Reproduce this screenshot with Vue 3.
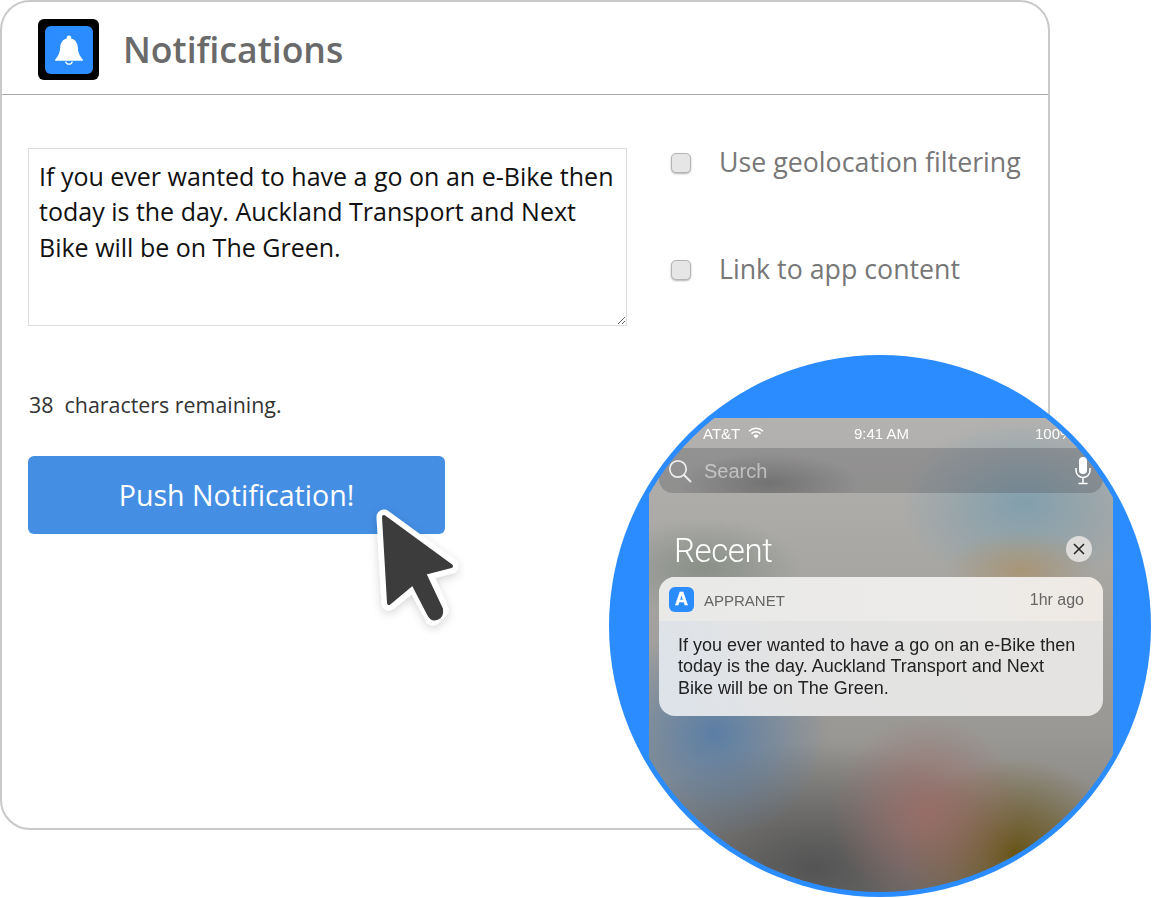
<script setup>
import { ref } from 'vue'

const message = ref('If you ever wanted to have a go on an e-Bike then today is the day. Auckland Transport and Next Bike will be on The Green.')
const remaining = ref(38)
const options = ['Use geolocation filtering', 'Link to app content']
</script>

<template>
  <div class="page">
    <section class="panel">
      <header class="panel-head">
        <div class="app-icon">
          <div class="app-icon-inner">
            <svg width="30" height="32" viewBox="0 0 30 32">
              <path fill="#fff" d="M15 1.500c1.300 0 2.200.9 2.200 2v1c4.300 1 6.300 4.600 6.600 8.800.3 4.800 1.400 8.200 5 12.200.4.500.1 1.300-.6 1.300H1.800c-.7 0-1-.8-.6-1.300 3.600-4 4.700-7.400 5-12.200.3-4.200 2.300-7.800 6.600-8.800v-1c0-1.100.9-2 2.200-2z"/>
              <path fill="none" stroke="#fff" stroke-width="1.200" d="M11.600 27.500a3.500 3.500 0 0 0 6.800 0"/>
            </svg>
          </div>
        </div>
        <h1 class="title">Notifications</h1>
      </header>
      <div class="panel-body">
        <div class="form-col">
          <textarea v-model="message" class="message"></textarea>
          <p class="counter">{{ remaining }}&nbsp; characters remaining.</p>
          <button class="push-btn">Push Notification!</button>
        </div>
        <div class="options">
          <label v-for="opt in options" :key="opt" class="option">
            <input type="checkbox" class="check" />
            <span>{{ opt }}</span>
          </label>
        </div>
      </div>
    </section>

    <!-- cursor over the button -->
    <svg class="cursor" width="100" height="135" viewBox="365 500 100 135">
      <defs>
        <filter id="cursor-shadow" x="-30%" y="-30%" width="160%" height="160%">
          <feDropShadow dx="0" dy="3" stdDeviation="5" flood-color="#000" flood-opacity="0.16"/>
        </filter>
      </defs>
      <path filter="url(#cursor-shadow)" fill="#fff" stroke="#fff" stroke-width="15" stroke-linejoin="round"
        d="M384 517 L451 566 L425 573 L441 610 L433 618 L414 583 L389 603 Z"/>
      <path fill="#3c3c3c" stroke="#3c3c3c" stroke-width="4" stroke-linejoin="round"
        d="M384 517 L451 566 L424 573 L441 609 Q442 616 437 618 Q432 620 429 614 L413 583 L389 603 Z"/>
    </svg>

    <!-- phone preview bubble -->
    <div class="bubble">
      <div class="bubble-clip">
        <div class="screen">
          <div class="status">
            <span class="carrier">AT&amp;T</span>
            <svg class="wifi" width="16" height="12" viewBox="0 0 16 12">
              <path fill="none" stroke="#fff" stroke-width="1.500" d="M1 4.200a10 10 0 0 1 14 0M3.400 6.600a6.600 6.600 0 0 1 9.200 0"/>
              <path fill="#fff" d="M8 11.500 5.400 8.700a3.700 3.700 0 0 1 5.200 0z"/>
            </svg>
            <span class="clock">9:41 AM</span>
            <span class="battery">100%</span>
          </div>
          <div class="search">
            <svg width="24" height="24" viewBox="0 0 24 24">
              <circle cx="10" cy="10" r="8.200" fill="none" stroke="#eee" stroke-width="1.700"/>
              <path d="M16 16l6.500 6.500" stroke="#eee" stroke-width="2" stroke-linecap="round"/>
            </svg>
            <span class="search-text">Search</span>
            <svg class="mic" width="16" height="28" viewBox="0 0 16 28">
              <rect x="4" y="0" width="8" height="17" rx="4" fill="#fff"/>
              <path d="M1 11v2.500a7 7 0 0 0 14 0V11M8 20.500V26M3.500 26.500h9" fill="none" stroke="#fff" stroke-width="1.500"/>
            </svg>
          </div>
          <div class="recent-row">
            <span class="recent">Recent</span>
            <span class="close">
              <svg width="12" height="12" viewBox="0 0 12 12">
                <path d="M1 1l10 10M11 1 1 11" stroke="#222" stroke-width="1.500"/>
              </svg>
            </span>
          </div>
          <article class="note">
            <div class="note-head">
              <span class="note-icon">A</span>
              <span class="note-app">APPRANET</span>
              <span class="note-time">1hr ago</span>
            </div>
            <p class="note-text">{{ message }}</p>
          </article>
        </div>
      </div>
    </div>
  </div>
</template>

<style>
html, body {
  margin: 0;
  background: #fff;
}
</style>

<style scoped>
.page {
  position: relative;
  width: 1152px;
  height: 898px;
  overflow: hidden;
  font-family: "Open Sans", sans-serif;
}

.panel {
  box-sizing: border-box;
  width: 1050px;
  height: 830px;
  border: 2px solid #c9c9c9;
  border-radius: 30px;
  background: #fff;
}

.panel-head {
  display: flex;
  align-items: center;
  gap: 24px;
  box-sizing: border-box;
  height: 93px;
  padding: 3px 0 0 36px;
  border-bottom: 1px solid #aaa;
}

.app-icon {
  display: flex;
  align-items: center;
  justify-content: center;
  width: 61px;
  height: 61px;
  background: #000;
  border-radius: 6px;
}

.app-icon-inner {
  display: flex;
  align-items: center;
  justify-content: center;
  width: 48px;
  height: 48px;
  background: #2b8cff;
  border-radius: 6px;
}

.title {
  margin: -2px 0 0;
  font-size: 35.600px;
  font-weight: 600;
  color: #6a6a6a;
}

.panel-body {
  display: flex;
  padding: 53px 0 0 26px;
}

.form-col {
  display: flex;
  flex-direction: column;
  align-items: flex-start;
  width: 599px;
}

.message {
  box-sizing: border-box;
  width: 599px;
  height: 178px;
  padding: 9.500px 10px;
  border: 1px solid #ddd;
  outline: none;
  font-family: "Open Sans", sans-serif;
  font-size: 25px;
  line-height: 35.500px;
  color: #111;
}

.counter {
  margin: 65px 0 0 1px;
  font-size: 21.400px;
  line-height: 28px;
  color: #333;
}

.push-btn {
  width: 417px;
  height: 78px;
  margin-top: 37px;
  padding: 0 0 2px;
  border: none;
  border-radius: 6px;
  background: #448ee4;
  color: #fff;
  font-family: "Open Sans", sans-serif;
  font-size: 28.600px;
  font-weight: 500;
}

.options {
  display: flex;
  flex-direction: column;
  gap: 71px;
  margin: -5px 0 0 44px;
}

.option {
  display: flex;
  align-items: center;
  gap: 28px;
  height: 36px;
  font-size: 26.750px;
  color: #777;
}

.check {
  appearance: none;
  flex: none;
  box-sizing: border-box;
  width: 20px;
  height: 20px;
  margin: 4px 0 0;
  border: 1px solid #b4b4b4;
  border-radius: 5px;
  background: #e6e6e6;
  box-shadow: 0 1px 2px rgba(0, 0, 0, 0.3);
}

.cursor {
  position: absolute;
  left: 365px;
  top: 500px;
}

.bubble {
  position: absolute;
  left: 609px;
  top: 355px;
  box-sizing: border-box;
  width: 542px;
  height: 542px;
  padding: 5px;
  border-radius: 50%;
  background: #2b8cff;
}

.bubble-clip {
  width: 532px;
  height: 532px;
  border-radius: 50%;
  overflow: hidden;
}

.screen {
  box-sizing: border-box;
  width: 464px;
  height: 476px;
  margin: 58px 0 0 35px;
  padding: 0 10px;
  font-family: "Liberation Sans", sans-serif;
  filter: blur(0.35px);
  background:
    radial-gradient(ellipse 75px 40px at 372px 152px, rgba(172, 146, 108, 0.8), transparent),
    radial-gradient(ellipse 125px 85px at 375px 85px, rgba(115, 155, 175, 0.75), transparent),
    radial-gradient(ellipse 100px 50px at 55px 150px, rgba(125, 135, 125, 0.7), transparent),
    radial-gradient(ellipse 115px 105px at 65px 315px, rgba(80, 122, 168, 0.85), transparent),
    radial-gradient(ellipse 95px 95px at 278px 395px, rgba(155, 108, 102, 0.9), transparent),
    radial-gradient(ellipse 110px 95px at 365px 435px, rgba(105, 85, 25, 1), transparent),
    radial-gradient(ellipse 210px 125px at 165px 450px, rgba(84, 84, 84, 1), transparent),
    linear-gradient(#b4b2b0 0, #a9a8a5 130px, #999793 320px, #7c7a78 476px);
}

.status {
  position: relative;
  display: flex;
  align-items: center;
  height: 30px;
  padding-left: 44px;
  font-size: 15px;
  color: #fff;
}

.wifi {
  margin-left: 8px;
}

.clock {
  position: absolute;
  left: 195px;
}

.battery {
  position: absolute;
  left: 376px;
}

.search {
  display: flex;
  align-items: center;
  box-sizing: border-box;
  height: 45px;
  padding: 0 12px 0 9px;
  border-radius: 14px;
  background:
    radial-gradient(ellipse 90px 30px at 110px 35px, rgba(60, 60, 60, 0.35), transparent),
    rgba(70, 70, 75, 0.28);
}

.search-text {
  margin: 2px 0 0 12px;
  font-size: 20px;
  color: rgba(255, 255, 255, 0.5);
}

.mic {
  margin-left: auto;
}

.recent-row {
  display: flex;
  align-items: center;
  justify-content: space-between;
  box-sizing: border-box;
  height: 84px;
  padding: 28px 11px 0 15px;
}

.recent {
  margin-top: 2px;
  font-family: Roboto, sans-serif;
  font-size: 33px;
  font-weight: 300;
  letter-spacing: -0.4px;
  color: #fff;
}

.close {
  display: flex;
  align-items: center;
  justify-content: center;
  width: 26px;
  height: 26px;
  border-radius: 50%;
  background: #dedddc;
}

.note {
  height: 139px;
  border-radius: 16px;
  overflow: hidden;
  background: linear-gradient(70deg, #dde3ea, #e3e3e3 30%, #e4e3e1);
}

.note-head {
  display: flex;
  align-items: center;
  box-sizing: border-box;
  height: 44px;
  padding: 0 19px 0 10px;
  background: linear-gradient(90deg, #e9e9e8, #ecebe9 70%, #efe9e3);
  color: #666;
}

.note-icon {
  display: flex;
  align-items: center;
  justify-content: center;
  width: 25px;
  height: 25px;
  border-radius: 6px;
  background: #2b8cff;
  color: #fff;
  font-size: 18px;
  font-weight: 700;
  -webkit-text-stroke: 0.5px #fff;
}

.note-app {
  margin: 2px 0 0 10px;
  font-size: 15px;
}

.note-time {
  margin: 2px 0 0 auto;
  font-size: 16px;
}

.note-text {
  margin: 14px 24px 0 19px;
  font-size: 18px;
  line-height: 21.300px;
  color: #222;
}
</style>
